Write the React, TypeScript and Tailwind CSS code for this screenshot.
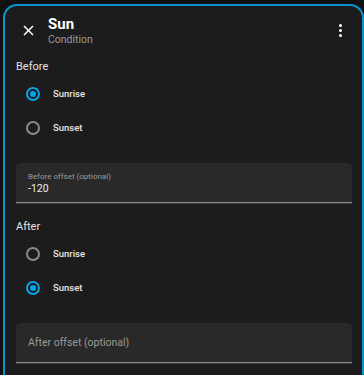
import React from "react";

const font = { fontFamily: "Roboto, 'Noto Sans', sans-serif" };

function Radio({ checked }: { checked: boolean }) {
  return (
    <div
      className={
        checked
          ? "w-[14px] h-[14px] rounded-full border-2 border-[#07a4e8] flex items-center justify-center"
          : "w-[14px] h-[14px] rounded-full border-2 border-[#8a8a8a]"
      }
    >
      {checked && <div className="w-[6px] h-[6px] rounded-full bg-[#07a4e8]" />}
    </div>
  );
}

function RadioRow({ label, checked }: { label: string; checked: boolean }) {
  return (
    <div className="h-[34px] flex items-center pl-[10px] gap-[13px]">
      <Radio checked={checked} />
      <span className="text-[9.5px] font-medium text-[#e6e6e6]">{label}</span>
    </div>
  );
}

export default function App() {
  const [before, setBefore] = React.useState("sunrise");
  const [after, setAfter] = React.useState("sunset");

  return (
    <div className="h-[375px] w-[364px] overflow-hidden bg-[#111111] pt-[4px] pl-[3px]" style={font}>
      <div className="w-[361px] h-[400px] rounded-t-[14px] border-2 border-b-0 border-[#0796d0] bg-[#1c1c1c] pl-[11px] pr-[10px]">
        {/* header */}
        <div className="h-[51px] flex items-start pt-[9px]">
          <button className="mt-[3px] w-[24px] h-[24px] flex items-center justify-center">
            <svg width="11" height="11" viewBox="0 0 11 11">
              <path d="M1 1L10 10M10 1L1 10" stroke="#ffffff" strokeWidth="1.5" />
            </svg>
          </button>
          <div className="ml-[8px] flex-1">
            <div className="text-[15px] leading-[18px] font-bold text-white">Sun</div>
            <div className="text-[10.5px] leading-[14px] text-[#9a9a9a]">Condition</div>
          </div>
          <button className="mt-[3px] w-[24px] h-[24px] flex flex-col items-center justify-center gap-[2px]">
            <span className="w-[3px] h-[3px] rounded-full bg-white" />
            <span className="w-[3px] h-[3px] rounded-full bg-white" />
            <span className="w-[3px] h-[3px] rounded-full bg-white" />
          </button>
        </div>

        <div className="text-[11px] leading-[20px] text-[#e3e3e3]">Before</div>
        <div onClick={() => setBefore("sunrise")}>
          <RadioRow label="Sunrise" checked={before === "sunrise"} />
        </div>
        <div onClick={() => setBefore("sunset")}>
          <RadioRow label="Sunset" checked={before === "sunset"} />
        </div>

        <div className="mt-[18px] h-[40px] rounded-t-[4px] bg-[#292929] border-b border-[#8a8a8a] shadow-[0_1px_0_#3c3c3c] pl-[12px] pt-[9px]">
          <div className="text-[8px] leading-[10px] text-[#9a9a9a]">Before offset (optional)</div>
          <div className="text-[10.5px] leading-[14px] text-[#ececec]">-120</div>
        </div>

        <div className="mt-[14px] text-[11px] leading-[20px] text-[#e3e3e3]">After</div>
        <div onClick={() => setAfter("sunrise")}>
          <RadioRow label="Sunrise" checked={after === "sunrise"} />
        </div>
        <div onClick={() => setAfter("sunset")}>
          <RadioRow label="Sunset" checked={after === "sunset"} />
        </div>

        <div className="mt-[18px] h-[40px] rounded-t-[4px] bg-[#292929] border-b border-[#8a8a8a] shadow-[0_1px_0_#3c3c3c] pl-[12px] flex items-center">
          <span className="text-[10.5px] text-[#9a9a9a]">After offset (optional)</span>
        </div>
      </div>
    </div>
  );
}
